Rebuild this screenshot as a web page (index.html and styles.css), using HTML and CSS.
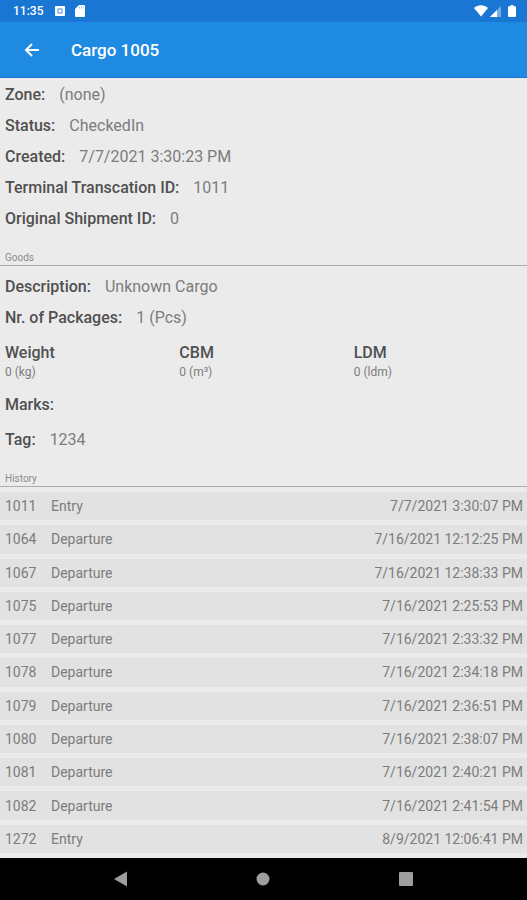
FILE: index.html
```html
<!DOCTYPE html>
<html lang="en">
<head>
    <meta charset="UTF-8">
    <meta name="viewport" content="width=device-width, initial-scale=1.0">
    <title>Cargo 1005</title>
    <link rel="stylesheet" href="styles.css">
</head>
<body>
<div class="status-bar">
    <span class="clock">11:35</span>
    <svg width="10" height="10" viewBox="0 0 10 10">
        <rect width="10" height="10" rx="1" fill="#fff"/>
        <rect x="3" y="3" width="4" height="4" fill="#fff" stroke="#1976d2" stroke-opacity=".8"/>
    </svg>
    <svg width="10" height="12" viewBox="0 0 10 12">
        <path fill="#fff" d="M4 0h5a1 1 0 0 1 1 1v10a1 1 0 0 1-1 1H1a1 1 0 0 1-1-1V4z"/>
        <path stroke="#1976d2" stroke-opacity=".4" d="M4.500 1.500v2M6.500 1.500v2M8.500 1.500v2"/>
    </svg>
    <div class="status-right">
        <svg width="14" height="12" viewBox="0 0 14 12">
            <path fill="#fff" d="M7 11.500L0 3C2 1.200 4.300.300 7 .300S12 1.200 14 3z"/>
        </svg>
        <svg width="11" height="12" viewBox="0 0 11 12">
            <path fill="#fff" fill-opacity=".4" d="M0 12L11 1v11z"/>
            <path fill="#fff" d="M0 12l7-7v7z"/>
        </svg>
        <svg class="battery" width="8" height="12" viewBox="0 0 8 12">
            <path fill="#fff" d="M2.500 0h3v1.300H7a1 1 0 0 1 1 1V11a1 1 0 0 1-1 1H1a1 1 0 0 1-1-1V2.300a1 1 0 0 1 1-1h1.500z"/>
        </svg>
    </div>
</div>

<header class="toolbar">
    <button class="back" aria-label="Back">
        <svg width="16" height="16" viewBox="0 0 16 16">
            <path fill="none" stroke="#fff" stroke-width="2" d="M15 8H2M8 2L2 8l6 6"/>
        </svg>
    </button>
    <h1>Cargo 1005</h1>
</header>

<main>
    <dl class="fields">
        <div class="field"><dt>Zone:</dt><dd>(none)</dd></div>
        <div class="field"><dt>Status:</dt><dd>CheckedIn</dd></div>
        <div class="field"><dt>Created:</dt><dd>7/7/2021 3:30:23 PM</dd></div>
        <div class="field"><dt>Terminal Transcation ID:</dt><dd>1011</dd></div>
        <div class="field"><dt>Original Shipment ID:</dt><dd>0</dd></div>
    </dl>

    <h2>Goods</h2>
    <dl class="fields goods">
        <div class="field"><dt>Description:</dt><dd>Unknown Cargo</dd></div>
        <div class="field"><dt>Nr. of Packages:</dt><dd>1 (Pcs)</dd></div>
    </dl>
    <dl class="measures">
        <div><dt>Weight</dt><dd>0 (kg)</dd></div>
        <div><dt>CBM</dt><dd>0 (m³)</dd></div>
        <div><dt>LDM</dt><dd>0 (ldm)</dd></div>
    </dl>
    <dl class="fields extra">
        <div class="field"><dt>Marks:</dt><dd></dd></div>
        <div class="field"><dt>Tag:</dt><dd>1234</dd></div>
    </dl>

    <h2>History</h2>
    <table class="history">
        <tbody>
        <tr><td class="id">1011</td><td>Entry</td><td class="date">7/7/2021 3:30:07 PM</td></tr>
        <tr><td class="id">1064</td><td>Departure</td><td class="date">7/16/2021 12:12:25 PM</td></tr>
        <tr><td class="id">1067</td><td>Departure</td><td class="date">7/16/2021 12:38:33 PM</td></tr>
        <tr><td class="id">1075</td><td>Departure</td><td class="date">7/16/2021 2:25:53 PM</td></tr>
        <tr><td class="id">1077</td><td>Departure</td><td class="date">7/16/2021 2:33:32 PM</td></tr>
        <tr><td class="id">1078</td><td>Departure</td><td class="date">7/16/2021 2:34:18 PM</td></tr>
        <tr><td class="id">1079</td><td>Departure</td><td class="date">7/16/2021 2:36:51 PM</td></tr>
        <tr><td class="id">1080</td><td>Departure</td><td class="date">7/16/2021 2:38:07 PM</td></tr>
        <tr><td class="id">1081</td><td>Departure</td><td class="date">7/16/2021 2:40:21 PM</td></tr>
        <tr><td class="id">1082</td><td>Departure</td><td class="date">7/16/2021 2:41:54 PM</td></tr>
        <tr><td class="id">1272</td><td>Entry</td><td class="date">8/9/2021 12:06:41 PM</td></tr>
        </tbody>
    </table>
</main>

<nav class="nav-bar">
    <button aria-label="Back">
        <svg width="14" height="16" viewBox="0 0 14 16"><path fill="#9e9e9e" d="M0 8l13-7.500v15z"/></svg>
    </button>
    <button aria-label="Home">
        <svg width="14" height="14" viewBox="0 0 14 14"><circle cx="7" cy="7" r="6.500" fill="#9e9e9e"/></svg>
    </button>
    <button aria-label="Recent apps">
        <svg width="14" height="14" viewBox="0 0 14 14"><rect width="14" height="14" rx="1" fill="#9e9e9e"/></svg>
    </button>
</nav>
</body>
</html>
```
FILE: styles.css
```css
* {
    box-sizing: border-box;
}

body {
    margin: 0;
    min-height: 100vh;
    display: flex;
    flex-direction: column;
    font-family: Roboto, sans-serif;
    font-size: 16px;
    color: #7c7c7c;
    background: #ebebeb;
}

h1, h2, dl, dd {
    margin: 0;
}

button {
    display: flex;
    align-items: center;
    justify-content: center;
    padding: 0;
    border: none;
    background: none;
}

.status-bar {
    height: 22px;
    padding: 0 11px 0 13px;
    display: flex;
    align-items: center;
    gap: 10px;
    background: #1976d2;
}

.clock {
    width: 32px;
    font-size: 12px;
    font-weight: 500;
    color: #fff;
}

.status-right {
    margin-left: auto;
    display: flex;
    gap: 2px;
}

.battery {
    margin-left: 5px;
}

.toolbar {
    height: 56px;
    padding-left: 16px;
    display: flex;
    align-items: center;
    gap: 23px;
    background: #1e8ae1;
    border-bottom: 1px solid #1976d2;
}

.back {
    width: 32px;
    height: 32px;
}

h1 {
    font-size: 17px;
    font-weight: 500;
    color: #fff;
}

main {
    flex: 1;
    display: flex;
    flex-direction: column;
}

.fields {
    padding: 1px 5px 0;
}

.field {
    height: 31px;
    display: flex;
    align-items: center;
    gap: 14px;
}

dt {
    font-weight: 500;
    color: #505050;
}

h2 {
    padding: 18px 5px 1px;
    font-size: 10px;
    line-height: 12px;
    font-weight: 400;
    color: #8c8c8c;
    border-bottom: 1px solid #acacac;
}

.goods {
    padding-top: 5px;
}

.measures {
    padding: 10px 5px 0;
    display: grid;
    grid-template-columns: repeat(3, 1fr);
    gap: 6px;
}

.measures dt {
    line-height: 20px;
}

.measures dd {
    font-size: 12px;
    line-height: 18px;
}

.extra {
    padding-top: 8px;
    display: flex;
    flex-direction: column;
    gap: 4px;
}

.history {
    flex: 1;
    width: 100%;
    border-spacing: 0 5px;
    font-size: 14px;
}

.history td {
    height: 28px;
    padding: 0 4px 0 0;
    background: #e2e2e2;
}

.history .id {
    width: 51px;
    padding-left: 5px;
}

.history .date {
    text-align: right;
}

.nav-bar {
    height: 42px;
    padding: 0 50px;
    display: grid;
    grid-template-columns: repeat(3, 1fr);
    background: #000;
}
```
